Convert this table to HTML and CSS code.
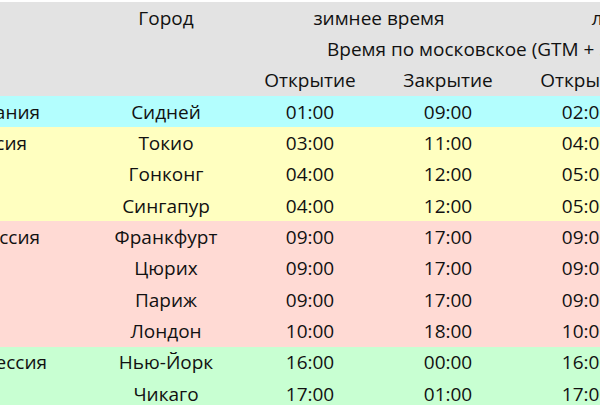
FILE: index.html
```html
<!DOCTYPE html>
<html lang="ru">
<head>
<meta charset="utf-8">
<link rel="stylesheet" href="styles.css">
</head>
<body>
<div class="wrap">
<table class="sched">
  <colgroup>
    <col class="c-sess"><col class="c-city"><col class="c-t"><col class="c-t"><col class="c-t"><col class="c-t">
  </colgroup>
  <thead>
    <tr><th></th><th>Город</th><th colspan="2">зимнее время</th><th colspan="2">летнее время</th></tr>
    <tr><th></th><th></th><th colspan="4" class="msk">Время по московское (GTM + 3)</th></tr>
    <tr><th></th><th></th><th>Открытие</th><th>Закрытие</th><th>Открытие</th><th>Закрытие</th></tr>
  </thead>
  <tbody>
    <tr class="pac"><td class="sess sess-pac">Тихоокеания</td><td>Сидней</td><td>01:00</td><td>09:00</td><td>02:00</td><td>10:00</td></tr>
    <tr class="asia"><td class="sess sess-asia">Азиатская сессия</td><td>Токио</td><td>03:00</td><td>11:00</td><td>04:00</td><td>12:00</td></tr>
    <tr class="asia"><td></td><td>Гонконг</td><td>04:00</td><td>12:00</td><td>05:00</td><td>13:00</td></tr>
    <tr class="asia"><td></td><td>Сингапур</td><td>04:00</td><td>12:00</td><td>05:00</td><td>13:00</td></tr>
    <tr class="eu"><td class="sess sess-eu">Европейская сессия</td><td>Франкфурт</td><td>09:00</td><td>17:00</td><td>09:00</td><td>17:00</td></tr>
    <tr class="eu"><td></td><td>Цюрих</td><td>09:00</td><td>17:00</td><td>09:00</td><td>17:00</td></tr>
    <tr class="eu"><td></td><td>Париж</td><td>09:00</td><td>17:00</td><td>09:00</td><td>17:00</td></tr>
    <tr class="eu"><td></td><td>Лондон</td><td>10:00</td><td>18:00</td><td>10:00</td><td>18:00</td></tr>
    <tr class="am"><td class="sess sess-am">Американская сессия</td><td>Нью-Йорк</td><td>16:00</td><td>00:00</td><td>16:00</td><td>00:00</td></tr>
    <tr class="am"><td></td><td>Чикаго</td><td>17:00</td><td>01:00</td><td>17:00</td><td>01:00</td></tr>
  </tbody>
</table>
</div>
</body>
</html>
```
FILE: styles.css
```css
html, body {
  margin: 0;
  padding: 0;
  background: #ffffff;
  overflow: hidden;
}
.wrap {
  padding-top: 2px;
  overflow: hidden;
  width: 600px;
  height: 403px;
}
.sched {
  margin-left: -209px;
  border-collapse: collapse;
  table-layout: fixed;
  width: 911px;
  font-family: "Open Sans", "Noto Sans", sans-serif;
  font-size: 19px;
  color: #111111;
}
.c-sess { width: 300px; }
.c-city { width: 150px; }
.c-t { width: 138px; }
.sched th, .sched td {
  height: 31.33px;
  padding: 0;
  text-align: center;
  vertical-align: middle;
  font-weight: normal;
  white-space: nowrap;
  overflow: hidden;
  line-height: 24px;
}
.sched th.msk {
  text-align: left;
  padding-left: 86px;
}
.sched td.sess { text-align: right; }
.sched td.sess-pac { padding-right: 51px; }
.sched td.sess-asia { padding-right: 64px; }
.sched td.sess-eu { padding-right: 51px; }
.sched td.sess-am { padding-right: 44px; }
.sched thead th { background: #e3e3e3; }
.pac td { background: #b3fefe; }
.asia td { background: #ffffc0; }
.eu td { background: #ffdad4; }
.am td { background: #c8ffd2; }
```
